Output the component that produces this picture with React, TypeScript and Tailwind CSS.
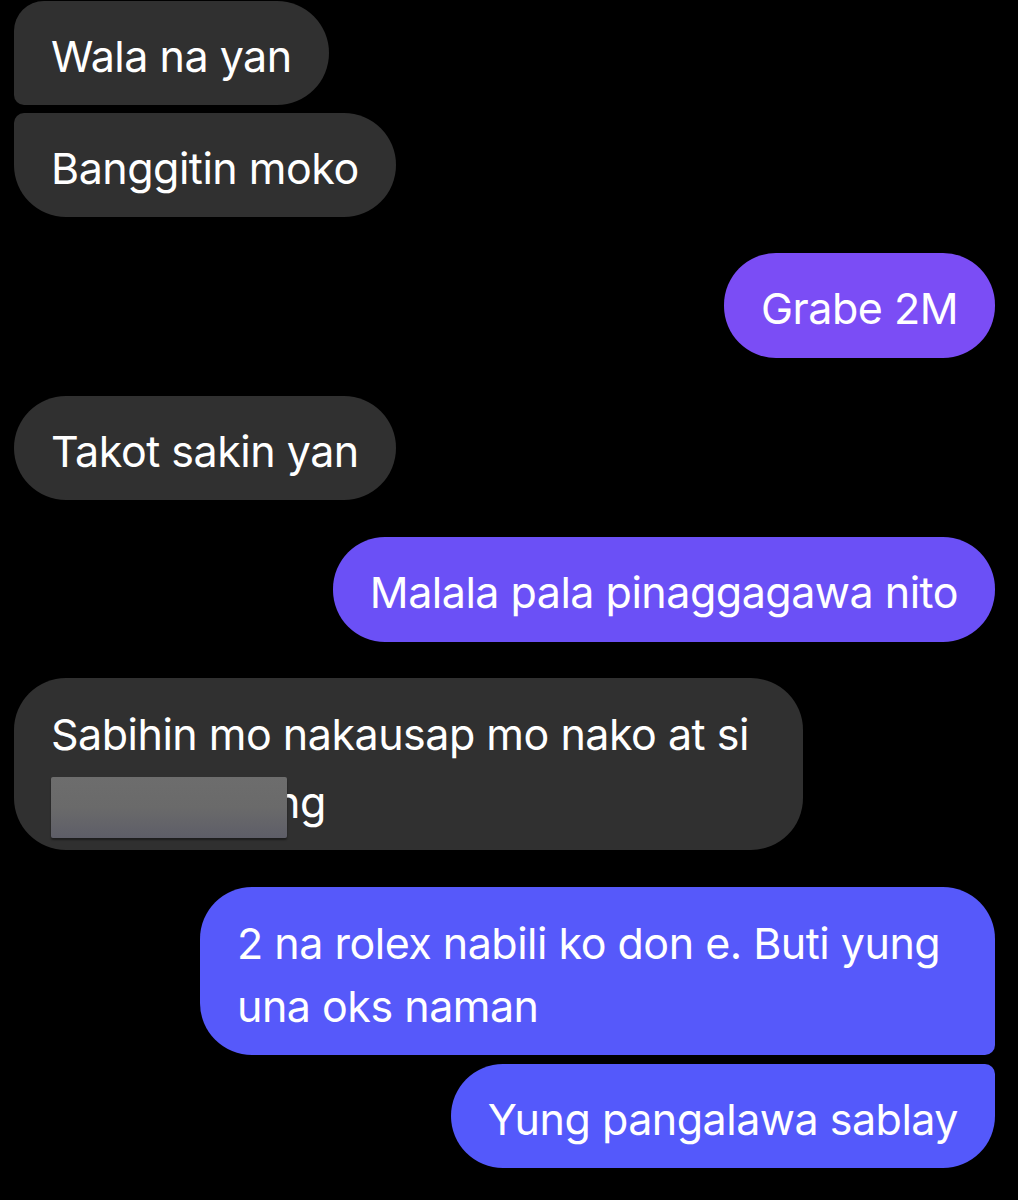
import React from "react";

const font = { fontFamily: "Inter, 'Noto Sans', sans-serif" };

export default function App() {
  return (
    <div
      className="w-[1018px] h-[1200px] bg-black overflow-hidden text-white flex flex-col pl-[14px] pr-[23px] pt-[1px] text-[43px] leading-[64px] tracking-[-0.5px]"
      style={font}
    >
      {/* left group */}
      <div className="self-start bg-[#303030] rounded-tl-[30px] rounded-tr-[52px] rounded-br-[52px] rounded-bl-[10px] px-[37px] pt-[23px] pb-[17px]">
        Wala na yan
      </div>
      <div className="mt-[8px] self-start bg-[#303030] rounded-tl-[10px] rounded-tr-[52px] rounded-br-[52px] rounded-bl-[52px] px-[37px] pt-[23px] pb-[17px]">
        Banggitin moko
      </div>

      <div className="mt-[36px] self-end bg-[#7b4df5] rounded-[52px] px-[37px] pt-[23px] pb-[18px]">
        Grabe 2M
      </div>

      <div className="mt-[38px] self-start bg-[#303030] rounded-[52px] px-[37px] pt-[23px] pb-[17px]">
        Takot sakin yan
      </div>

      <div className="mt-[37px] self-end bg-[#6b50f6] rounded-[52px] px-[37px] pt-[23px] pb-[18px]">
        Malala pala pinaggagawa nito
      </div>

      <div className="mt-[36px] self-start w-[789px] bg-[#303030] rounded-[52px] px-[37px] pt-[22px] pb-[12px] leading-[68px]">
        <div>Sabihin mo nakausap mo nako at si</div>
        <div className="whitespace-nowrap">
          <span className="relative z-10 inline-block w-[236px] h-[61px] align-[-20px] rounded-[2px] bg-gradient-to-b from-[#6d6d6d] via-[#6a6a6a] to-[#5e5e68] shadow-[0_2px_2px_rgba(0,0,0,0.4)]" />
          <span className="ml-[-12px]">ng</span>
        </div>
      </div>

      <div className="mt-[37px] self-end w-[795px] bg-[#5659fa] rounded-tl-[52px] rounded-tr-[52px] rounded-bl-[52px] rounded-br-[10px] px-[37px] pt-[25px] pb-[17px] leading-[63px]">
        <div>2 na rolex nabili ko don e. Buti yung</div>
        <div>una oks naman</div>
      </div>

      <div className="mt-[9px] self-end bg-[#5459fb] rounded-tl-[52px] rounded-tr-[10px] rounded-bl-[52px] rounded-br-[52px] px-[37px] pt-[23px] pb-[17px]">
        Yung pangalawa sablay
      </div>
    </div>
  );
}
